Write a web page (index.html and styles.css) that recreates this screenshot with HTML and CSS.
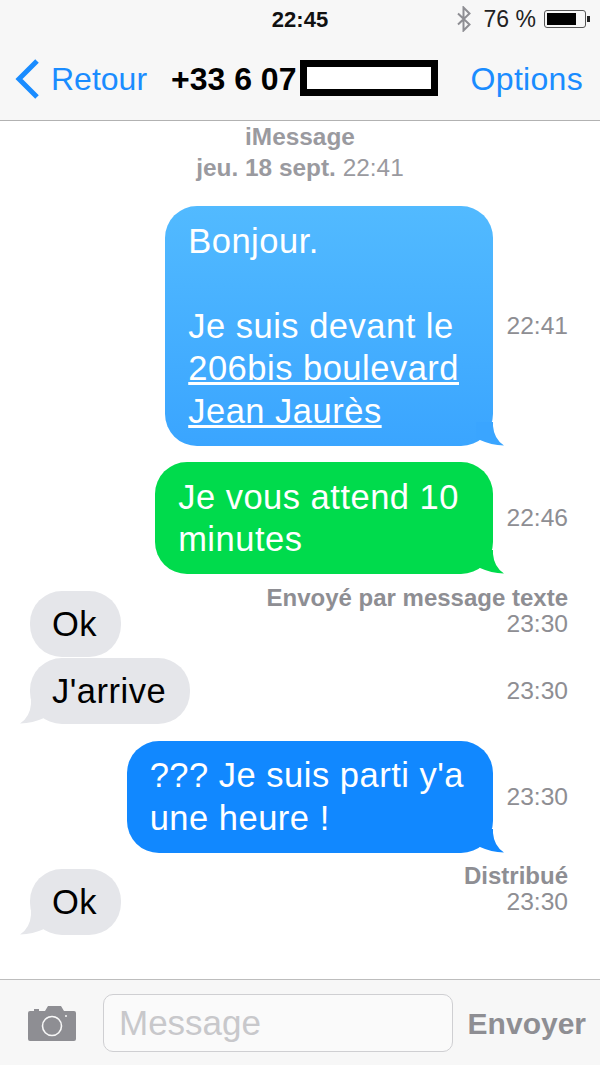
FILE: index.html
```html
<!DOCTYPE html>
<html lang="fr">
<head>
  <meta charset="UTF-8">
  <meta name="viewport" content="width=device-width, initial-scale=1.0">
  <title>Messages</title>
  <link rel="stylesheet" href="styles.css">
</head>
<body>
  <div class="phone">
    <header class="top">
      <!-- Status bar -->
      <div class="status">
        <span class="clock">22:45</span>
        <div class="status-right">
          <svg class="bt" width="16" height="26" viewBox="0 0 16 26">
            <path d="M2 7.5 L13.5 18.5 L7.5 24.5 V1.5 L13.5 7.5 L2 18.5" fill="none" stroke="#8e8e93" stroke-width="2"/>
          </svg>
          <span class="percent">76 %</span>
          <div class="battery"><div class="battery-level"></div></div>
          <div class="battery-tip"></div>
        </div>
      </div>

      <!-- Nav bar -->
      <nav class="nav">
        <div class="back">
          <svg width="26" height="40" viewBox="0 0 26 40">
            <path d="M23 2 L5 20 L23 38" fill="none" stroke="#1a8cff" stroke-width="5"/>
          </svg>
          <span>Retour</span>
        </div>
        <div class="contact">
          <span>+33 6 07</span>
          <div class="redacted"></div>
        </div>
        <span class="options">Options</span>
      </nav>
    </header>

    <main class="thread">
      <div class="thread-head">
        <div class="bold">iMessage</div>
        <div><span class="bold">jeu. 18 sept.</span> 22:41</div>
      </div>

      <div class="row sent first">
        <div class="bubble imsg-light">
          Bonjour.<br><br>Je suis devant le<br><u>206bis boulevard<br>Jean Jaurès</u>
          <svg class="tail tail-right" width="28" height="24" viewBox="0 0 28 24">
            <path d="M17 0 V4 Q18 17 28 23.5 Q15 23 4 18 L0 18 V0 Z" fill="#3aa5ff"/>
          </svg>
        </div>
        <div class="time">22:41</div>
      </div>

      <div class="row sent green-row">
        <div class="bubble sms">
          Je vous attend 10<br>minutes
          <svg class="tail tail-right" width="28" height="24" viewBox="0 0 28 24">
            <path d="M17 0 V4 Q18 17 28 23.5 Q15 23 4 18 L0 18 V0 Z" fill="#00db4c"/>
          </svg>
        </div>
        <div class="time">22:46</div>
      </div>

      <div class="row received ok-one">
        <div class="bubble gray">Ok</div>
        <div class="side">
          <div class="note">Envoyé par message texte</div>
          <div class="time">23:30</div>
        </div>
      </div>

      <div class="row received arrive">
        <div class="bubble gray">
          J'arrive
          <svg class="tail tail-left" width="28" height="24" viewBox="0 0 28 24">
            <path d="M11 0 V4 Q10 17 0 23.5 Q13 23 24 18 L28 18 V0 Z" fill="#e5e6ea"/>
          </svg>
        </div>
        <div class="time">23:30</div>
      </div>

      <div class="row sent parti">
        <div class="bubble imsg">
          ??? Je suis parti y'a<br>une heure !
          <svg class="tail tail-right" width="28" height="24" viewBox="0 0 28 24">
            <path d="M17 0 V4 Q18 17 28 23.5 Q15 23 4 18 L0 18 V0 Z" fill="#1188ff"/>
          </svg>
        </div>
        <div class="time">23:30</div>
      </div>

      <div class="row received ok-two">
        <div class="bubble gray">
          Ok
          <svg class="tail tail-left" width="28" height="24" viewBox="0 0 28 24">
            <path d="M11 0 V4 Q10 17 0 23.5 Q13 23 24 18 L28 18 V0 Z" fill="#e5e6ea"/>
          </svg>
        </div>
        <div class="side">
          <div class="note">Distribué</div>
          <div class="time">23:30</div>
        </div>
      </div>
    </main>

    <!-- Input bar -->
    <footer class="composer">
      <svg class="camera" width="48" height="36" viewBox="0 0 48 36">
        <path d="M2 6 H6 V4 H11 V6 H17 L20 1 H33 L36 6 H46 Q48 6 48 8 V34 Q48 36 46 36 H2 Q0 36 0 34 V8 Q0 6 2 6Z" fill="#8e8e93"/>
        <circle cx="24" cy="21" r="9.5" fill="none" stroke="#f7f7f7" stroke-width="1.6"/>
        <circle cx="38" cy="11" r="1" fill="#f7f7f7"/>
      </svg>
      <div class="field">Message</div>
      <span class="send">Envoyer</span>
    </footer>
  </div>
</body>
</html>
```

FILE: styles.css
```css
/* Messages screen */
body {
  margin: 0;
  background: #fff;
  font-family: "Liberation Sans", Arial, sans-serif;
}

.phone {
  width: 600px;
  height: 1065px;
  display: flex;
  flex-direction: column;
  overflow: hidden;
}

.top {
  height: 120px;
  background: #f7f7f7;
  border-bottom: 1px solid #b2b2b2;
}

.status {
  height: 40px;
  display: flex;
  justify-content: center;
  align-items: center;
  position: relative;
}

.clock {
  font-size: 22px;
  font-weight: bold;
  color: #111;
}

.status-right {
  position: absolute;
  right: 10px;
  top: 6px;
  display: flex;
  align-items: center;
  height: 26px;
}

.bt {
  margin-right: 12px;
}

.percent {
  font-size: 23px;
  color: #222;
  margin-right: 8px;
}

.battery {
  width: 42px;
  height: 18px;
  border: 1px solid #555;
  border-radius: 3px;
  padding: 2px;
  box-sizing: border-box;
}

.battery-level {
  width: 29px;
  height: 100%;
  background: #000;
}

.battery-tip {
  width: 3px;
  height: 6px;
  margin-left: 1px;
  background: #222;
}

.nav {
  height: 80px;
  display: flex;
  align-items: center;
  padding: 0 17px 2px 14px;
  box-sizing: border-box;
  font-size: 32px;
  color: #1a8cff;
}

.back {
  display: flex;
  align-items: center;
  gap: 11px;
  width: 157px;
}

.options {
  letter-spacing: 0.3px;
}

.contact {
  display: flex;
  align-items: center;
  flex: 1;
  gap: 4px;
  color: #000;
  font-weight: bold;
}

.redacted {
  width: 124px;
  height: 22px;
  margin-bottom: 3px;
  border: 7px solid #000;
  background: #fff;
}

.thread {
  flex: 1;
}

.thread-head {
  text-align: center;
  font-size: 24.4px;
  line-height: 31px;
  color: #9a9a9f;
}

.bold {
  font-weight: bold;
}

.row {
  display: flex;
  align-items: center;
  padding: 0 32px 0 30px;
}

.sent {
  justify-content: flex-end;
}

.received {
  justify-content: space-between;
}

.first {
  margin-top: 23px;
}

.green-row {
  margin-top: 16.5px;
}

.ok-one {
  margin-top: 10.5px;
  align-items: flex-end;
}

.arrive {
  margin-top: 1.5px;
}

.parti {
  margin-top: 17px;
}

.ok-two {
  margin-top: 10px;
  align-items: flex-end;
}

.bubble {
  position: relative;
  padding: 13.5px 29px 13.5px 23px;
  border-radius: 32px;
  font-size: 34.5px;
  letter-spacing: 0.5px;
  line-height: 42.5px;
  color: #fff;
}

.imsg-light {
  padding-right: 34px;
  background: linear-gradient(#52baff, #3aa5ff);
}

.sms {
  padding-right: 34px;
  background: #00db4c;
}

.imsg {
  background: #1188ff;
}

.gray {
  padding: 11.5px 24px 11.5px 22px;
  background: #e5e6ea;
  color: #000;
}

.tail {
  position: absolute;
  bottom: 0;
}

.tail-right {
  right: -10.5px;
}

.tail-left {
  left: -10.5px;
}

.time {
  width: 62px;
  margin-left: 13px;
  text-align: right;
  font-size: 24.6px;
  line-height: 26px;
  color: #8e8e93;
  flex-shrink: 0;
}

.side {
  padding-bottom: 20px;
  text-align: right;
}

.side .time {
  margin-left: auto;
}

.note {
  font-size: 24px;
  line-height: 26px;
  font-weight: bold;
  color: #8e8e93;
}

.composer {
  height: 86px;
  background: #f7f7f7;
  border-top: 1px solid #bdbdbd;
  display: flex;
  align-items: center;
  padding: 0 14px 0 28px;
  box-sizing: border-box;
}

.camera {
  margin-right: 27px;
  flex-shrink: 0;
}

.field {
  width: 350px;
  height: 58px;
  box-sizing: border-box;
  padding-left: 15px;
  border: 1px solid #cfcfd2;
  border-radius: 10px;
  background: #fafafa;
  font-size: 35px;
  line-height: 56px;
  color: #c8c8cb;
}

.send {
  margin-left: 15px;
  padding-top: 2px;
  font-size: 30px;
  font-weight: bold;
  color: #8e8e93;
}
```
